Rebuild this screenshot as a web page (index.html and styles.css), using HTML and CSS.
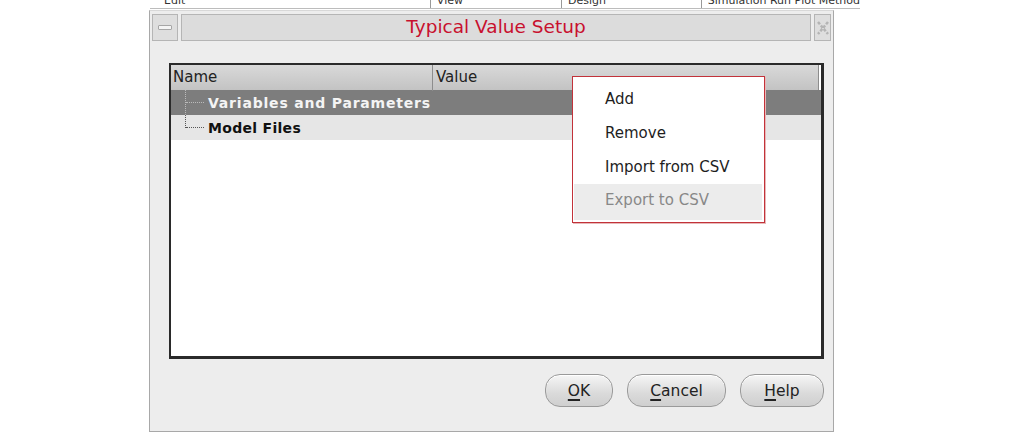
FILE: index.html
```html
<!DOCTYPE html>
<html>
<head>
<meta charset="utf-8">
<link rel="stylesheet" href="styles.css">
</head>
<body>
<div class="behind">
  <span class="b1">Edit</span><span class="b2">View</span><span class="b3">Design</span><span class="b4">Simulation Run Plot Method</span>
</div>
<div class="dialog">
  <div class="titlebar">
    <div class="tbtn min"><span class="minbar"></span></div>
    <div class="title">Typical Value Setup</div>
    <div class="tbtn close">
      <svg width="14" height="16" viewBox="0 0 14 16"><path d="M2 2 L12 14 M12 2 L2 14" stroke="#b4b4b4" stroke-width="2.5" stroke-dasharray="3 1.5" fill="none"/></svg>
    </div>
  </div>
  <div class="body">
    <div class="tree">
      <div class="header">
        <div class="col name">Name</div>
        <div class="col value">Value</div>
      </div>
      <div class="row selected">
        <span class="lines first"></span><span class="label wide">Variables and Parameters</span>
      </div>
      <div class="row normal">
        <span class="lines last"></span><span class="label">Model Files</span>
      </div>
    </div>
    <div class="buttons">
      <button class="btn ok"><u>O</u>K</button>
      <button class="btn cancel"><u>C</u>ancel</button>
      <button class="btn help"><u>H</u>elp</button>
    </div>
  </div>
  <div class="menu">
    <div class="item">Add</div>
    <div class="item">Remove</div>
    <div class="item">Import from CSV</div>
    <div class="item disabled">Export to CSV</div>
  </div>
</div>
</body>
</html>
```
FILE: styles.css
```css
html, body {
  margin: 0;
  padding: 0;
  background: #ffffff;
  width: 1013px;
  height: 439px;
  overflow: hidden;
  font-family: "DejaVu Sans", "Open Sans", sans-serif;
}
.behind {
  height: 9px;
  margin-left: 150px;
  width: 710px;
  overflow: hidden;
  font-size: 11px;
  color: #333;
  border-bottom: 1px solid #bcbcbc;
  box-sizing: border-box;
  display: flex;
}
.behind span {
  display: block;
  line-height: 0;
  padding-top: 1px;
  white-space: nowrap;
}
.b1 { width: 300px; padding-left: 14px; }
.b2 { width: 140px; border-left: 1px solid #999; padding-left: 6px; }
.b3 { width: 150px; border-left: 1px solid #999; padding-left: 6px; }
.b4 { border-left: 1px solid #999; padding-left: 6px; }

.dialog {
  position: relative;
  margin-left: 149px;
  margin-top: 1px;
  width: 685px;
  height: 422px;
  box-sizing: border-box;
  border: 1px solid #a8a8a8;
  border-top-color: #d8d8d8;
  background: #ededed;
  display: flex;
  flex-direction: column;
}
.titlebar {
  display: flex;
  gap: 3px;
  padding: 3px 2px 0 2px;
  height: 31px;
  box-sizing: border-box;
}
.tbtn {
  width: 26px;
  height: 27px;
  box-sizing: border-box;
  border: 1px solid #b5b5b5;
  background: #dedede;
  display: flex;
  align-items: center;
  justify-content: center;
}
.minbar {
  width: 12px;
  height: 3px;
  background: #f4f4f4;
  border: 1px solid #a6a6a6;
  border-radius: 1px;
}
.close { width: 17px; }
.title {
  flex: 1;
  height: 27px;
  box-sizing: border-box;
  border: 1px solid #b5b5b5;
  background: #dcdcdc;
  color: #c8102e;
  font-size: 18.5px;
  text-align: center;
  line-height: 24px;
  padding-left: 0;
}
.body {
  flex: 1;
  display: flex;
  flex-direction: column;
  padding: 21px 9px 0 19px;
}
.tree {
  height: 296px;
  box-sizing: border-box;
  border: 2px solid #2a2a2a;
  border-right-width: 3px;
  border-bottom-width: 3px;
  background: #ffffff;
  font-size: 14px;
}
.header {
  display: flex;
  height: 26px;
  background: linear-gradient(#d9d9d9, #c2c2c2);
  margin: 0 2px 0 0;
  border-right: 1px solid #8c8c8c;
}
.col {
  line-height: 24px;
  color: #222;
  font-size: 15px;
  padding-left: 2px;
}
.col.name { width: 259px; border-right: 1px solid #8d8d8d; }
.col.value { flex: 1; padding-left: 3px; }
.row {
  height: 25px;
  display: flex;
  align-items: center;
  font-weight: bold;
  letter-spacing: 0.3px;
}
.row .wide { letter-spacing: 0.8px; }
.row.selected { background: #7d7d7d; color: #f4f4f4; margin-top: -1px; }
.row.normal { background: #e6e6e6; color: #111; }
.lines {
  width: 20px;
  height: 25px;
  margin-left: 14px;
  margin-right: 3px;
  box-sizing: border-box;
  border-left: 1px dotted #555;
  position: relative;
}
.lines::after {
  content: "";
  position: absolute;
  left: 0;
  top: 12px;
  width: 18px;
  border-top: 1px dotted #555;
}
.lines.first { border-left-color: #bbb; }
.lines.first::after { border-top-color: #bbb; }
.lines.last { height: 13px; align-self: flex-start; }
.lines.last::after { top: 12px; }

.buttons {
  display: flex;
  justify-content: flex-end;
  gap: 14px;
  margin-top: 15px;
  padding-right: 0;
}
.btn {
  height: 33px;
  border: 1px solid #9a9a9a;
  border-radius: 15px;
  background: linear-gradient(#f6f6f6, #dadada 60%, #cfcfcf);
  font-family: "DejaVu Sans", "Open Sans", sans-serif;
  font-size: 15.5px;
  color: #222;
  padding: 0;
  box-shadow: inset 0 1px 0 #fff;
}
.btn u { text-decoration-thickness: 2px; text-underline-offset: 3px; }
.ok { width: 68px; }
.cancel { width: 99px; }
.help { width: 84px; }

.menu {
  position: absolute;
  left: 422px;
  top: 65px;
  width: 193px;
  box-sizing: border-box;
  border: 1px solid #c2323a;
  background: #ffffff;
  padding: 5px 2px 2px 1px;
  font-size: 15px;
  box-shadow: 1px 1px 0 #e8b8b8;
}
.item {
  height: 34px;
  line-height: 34px;
  padding-left: 31px;
  color: #1e1e1e;
}
.item.disabled {
  color: #888;
  background: #ececec;
  height: 36px;
  line-height: 32px;
}
```
